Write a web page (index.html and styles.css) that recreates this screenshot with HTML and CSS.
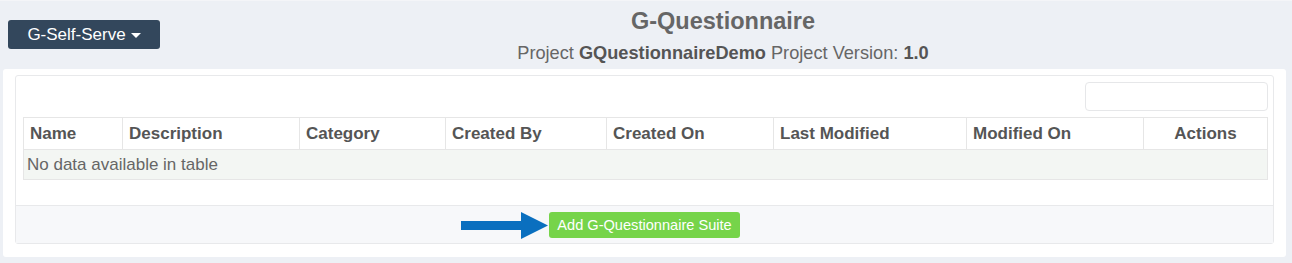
FILE: index.html
```html
<!DOCTYPE html>
<html>
<head>
<meta charset="utf-8">
<link rel="stylesheet" href="styles.css">
</head>
<body>
<div class="page">
  <header class="header">
    <button class="menu-btn">G-Self-Serve <span class="caret"></span></button>
    <div class="title-block">
      <h1 class="title">G-Questionnaire</h1>
      <div class="subtitle">Project <b>GQuestionnaireDemo</b> Project Version: <b>1.0</b></div>
    </div>
  </header>
  <main class="panel">
    <div class="inner">
      <div class="inner-body">
        <div class="toolbar"><input class="search" type="text"></div>
        <table class="grid">
          <colgroup>
            <col style="width:99px"><col style="width:177px"><col style="width:146px"><col style="width:161px"><col style="width:167px"><col style="width:193px"><col style="width:177px"><col>
          </colgroup>
          <thead>
            <tr>
              <th>Name</th><th>Description</th><th>Category</th><th>Created By</th><th>Created On</th><th>Last Modified</th><th>Modified On</th><th class="center">Actions</th>
            </tr>
          </thead>
          <tbody>
            <tr class="empty"><td colspan="8">No data available in table</td></tr>
          </tbody>
        </table>
      </div>
      <div class="footer">
        <div class="add-wrap">
          <svg class="arrow" width="87" height="27" viewBox="0 0 87 27"><path d="M0 9 H60 V0 L87 13.5 L60 27 V18 H0 Z" fill="#0a6fbf"/></svg>
          <button class="add-btn">Add G-Questionnaire Suite</button>
        </div>
      </div>
    </div>
  </main>
</div>
</body>
</html>
```
FILE: styles.css
```css
* { box-sizing: border-box; }
html, body { margin: 0; padding: 0; }
body {
  background: #edf0f5;
  font-family: "Liberation Sans", Arial, sans-serif;
  color: #666;
  border-top: 1px solid #f4f5f8;
}
.page { width: 1292px; height: 262px; }
.header {
  display: flex;
  height: 68px;
  padding: 0 6px 0 8px;
}
.menu-btn {
  margin-top: 19px;
  width: 152px;
  height: 29px;
  background: #33475c;
  color: #fff;
  border: none;
  border-radius: 3px;
  font-family: "Liberation Sans", Arial, sans-serif;
  font-size: 17px;
  padding: 0;
  display: flex;
  align-items: center;
  justify-content: center;
  gap: 5px;
}
.caret {
  display: inline-block;
  width: 0; height: 0;
  border-left: 5px solid transparent;
  border-right: 5px solid transparent;
  border-top: 5px solid #fff;
  margin-top: 2px;
}
.title-block { flex: 1; text-align: center; }
.title {
  margin: 7px 0 0;
  font-size: 23.5px;
  font-weight: bold;
  color: #666;
  line-height: 26px;
}
.subtitle {
  margin-top: 9px;
  font-size: 18.2px;
  line-height: 20px;
  color: #666;
}
.subtitle b { color: #555; }
.panel {
  margin: 0 6px 0 3px;
  background: #fff;
  border-radius: 3px;
  padding: 6px 12px 13px 12px;
}
.inner {
  border: 1px solid #e8e9eb;
  border-radius: 3px;
}
.inner-body { padding: 6px 5px 25px 7px; }
.toolbar { display: flex; justify-content: flex-end; }
.search {
  width: 183px;
  height: 29px;
  border: 1px solid #e6e7e9;
  border-radius: 4px;
  background: #fff;
}
.grid {
  margin-top: 6px;
  width: 100%;
  table-layout: fixed;
  border-collapse: collapse;
  font-size: 17px;
}
.grid th {
  text-align: left;
  font-weight: bold;
  color: #555;
  height: 32px;
  padding: 0 6px;
  border: 1px solid #e6e6e6;
  white-space: nowrap;
}
.grid th.center { text-align: center; }
.grid td {
  height: 30px;
  padding: 0 3px;
  background: #f3f6f3;
  border: 1px solid #e6e6e6;
  color: #666;
}
.footer {
  background: #f7f8fa;
  border-top: 1px solid #e8e9eb;
  height: 38px;
  display: flex;
  justify-content: center;
  align-items: center;
}
.add-wrap { position: relative; }
.arrow {
  position: absolute;
  right: 100%;
  top: 0;
  margin-right: 1px;
}
.add-btn {
  display: block;
  width: 191px;
  height: 26px;
  background: #76d44a;
  color: #fff;
  border: none;
  border-radius: 3px;
  font-family: "Liberation Sans", Arial, sans-serif;
  font-size: 14.6px;
  padding: 0;
}
```
